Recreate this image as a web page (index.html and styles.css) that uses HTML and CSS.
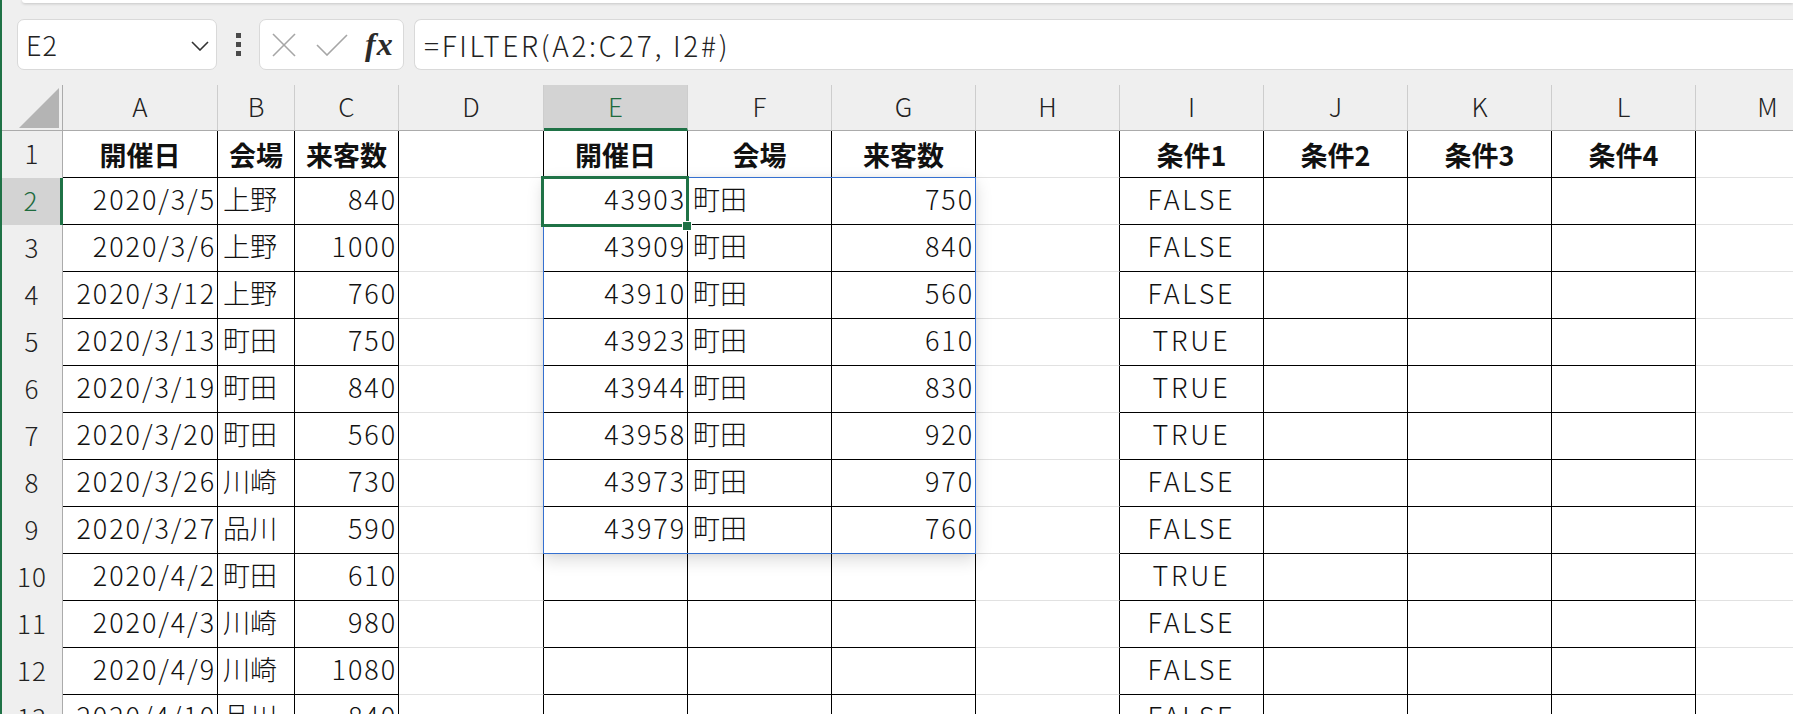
FILE: index.html
```html
<!DOCTYPE html>
<html lang="ja">
<head>
<meta charset="utf-8">
<title>Excel FILTER</title>
<link rel="stylesheet" href="styles.css">
</head>
<body>
<div class="app">
  <div class="ribbon-edge"></div>
  <div class="fbar">
    <div class="namebox">
      <span class="nb-text">E2</span>
      <svg class="chev" width="18" height="10" viewBox="0 0 18 10"><polyline points="1,1 9,9 17,1" fill="none" stroke="#333" stroke-width="1.6"/></svg>
    </div>
    <div class="dots"><i></i><i></i><i></i></div>
    <div class="fxbox">
      <svg class="ic-x" width="24" height="24" viewBox="0 0 24 24"><line x1="1" y1="1" x2="23" y2="23" stroke="#a6a6a6" stroke-width="1.6"/><line x1="23" y1="1" x2="1" y2="23" stroke="#a6a6a6" stroke-width="1.6"/></svg>
      <svg class="ic-ok" width="32" height="22" viewBox="0 0 32 22"><polyline points="1,11 11,21 31,1" fill="none" stroke="#a6a6a6" stroke-width="1.6"/></svg>
      <span class="fx">fx</span>
    </div>
    <div class="formula">=FILTER(A2:C27, I2#)</div>
  </div>

  <div class="sheet">
    <div class="grid">
      <div class="corner"><span class="tri"></span></div>
      <div class="ch">A</div><div class="ch">B</div><div class="ch">C</div><div class="ch">D</div>
      <div class="ch sel">E</div><div class="ch">F</div><div class="ch">G</div><div class="ch">H</div>
      <div class="ch">I</div><div class="ch">J</div><div class="ch">K</div><div class="ch">L</div><div class="ch">M</div>

      <div class="rh">1</div>
      <div class="c t hd">開催日</div><div class="c t hd">会場</div><div class="c t hd">来客数</div><div class="c g"></div>
      <div class="c t hd">開催日</div><div class="c t hd">会場</div><div class="c t hd">来客数</div><div class="c g"></div>
      <div class="c t hd">条件1</div><div class="c t hd">条件2</div><div class="c t hd">条件3</div><div class="c t hd">条件4</div><div class="c"></div>

      <div class="rh sel">2</div>
      <div class="c t r">2020/3/5</div><div class="c t l">上野</div><div class="c t r">840</div><div class="c g"></div>
      <div class="c t r">43903</div><div class="c t l">町田</div><div class="c t r">750</div><div class="c g"></div>
      <div class="c t m">FALSE</div><div class="c t"></div><div class="c t"></div><div class="c t"></div><div class="c"></div>

      <div class="rh">3</div>
      <div class="c t r">2020/3/6</div><div class="c t l">上野</div><div class="c t r">1000</div><div class="c g"></div>
      <div class="c t r">43909</div><div class="c t l">町田</div><div class="c t r">840</div><div class="c g"></div>
      <div class="c t m">FALSE</div><div class="c t"></div><div class="c t"></div><div class="c t"></div><div class="c"></div>

      <div class="rh">4</div>
      <div class="c t r">2020/3/12</div><div class="c t l">上野</div><div class="c t r">760</div><div class="c g"></div>
      <div class="c t r">43910</div><div class="c t l">町田</div><div class="c t r">560</div><div class="c g"></div>
      <div class="c t m">FALSE</div><div class="c t"></div><div class="c t"></div><div class="c t"></div><div class="c"></div>

      <div class="rh">5</div>
      <div class="c t r">2020/3/13</div><div class="c t l">町田</div><div class="c t r">750</div><div class="c g"></div>
      <div class="c t r">43923</div><div class="c t l">町田</div><div class="c t r">610</div><div class="c g"></div>
      <div class="c t m">TRUE</div><div class="c t"></div><div class="c t"></div><div class="c t"></div><div class="c"></div>

      <div class="rh">6</div>
      <div class="c t r">2020/3/19</div><div class="c t l">町田</div><div class="c t r">840</div><div class="c g"></div>
      <div class="c t r">43944</div><div class="c t l">町田</div><div class="c t r">830</div><div class="c g"></div>
      <div class="c t m">TRUE</div><div class="c t"></div><div class="c t"></div><div class="c t"></div><div class="c"></div>

      <div class="rh">7</div>
      <div class="c t r">2020/3/20</div><div class="c t l">町田</div><div class="c t r">560</div><div class="c g"></div>
      <div class="c t r">43958</div><div class="c t l">町田</div><div class="c t r">920</div><div class="c g"></div>
      <div class="c t m">TRUE</div><div class="c t"></div><div class="c t"></div><div class="c t"></div><div class="c"></div>

      <div class="rh">8</div>
      <div class="c t r">2020/3/26</div><div class="c t l">川崎</div><div class="c t r">730</div><div class="c g"></div>
      <div class="c t r">43973</div><div class="c t l">町田</div><div class="c t r">970</div><div class="c g"></div>
      <div class="c t m">FALSE</div><div class="c t"></div><div class="c t"></div><div class="c t"></div><div class="c"></div>

      <div class="rh">9</div>
      <div class="c t r">2020/3/27</div><div class="c t l">品川</div><div class="c t r">590</div><div class="c g"></div>
      <div class="c t r">43979</div><div class="c t l">町田</div><div class="c t r">760</div><div class="c g"></div>
      <div class="c t m">FALSE</div><div class="c t"></div><div class="c t"></div><div class="c t"></div><div class="c"></div>

      <div class="rh">10</div>
      <div class="c t r">2020/4/2</div><div class="c t l">町田</div><div class="c t r">610</div><div class="c g"></div>
      <div class="c t"></div><div class="c t"></div><div class="c t"></div><div class="c g"></div>
      <div class="c t m">TRUE</div><div class="c t"></div><div class="c t"></div><div class="c t"></div><div class="c"></div>

      <div class="rh">11</div>
      <div class="c t r">2020/4/3</div><div class="c t l">川崎</div><div class="c t r">980</div><div class="c g"></div>
      <div class="c t"></div><div class="c t"></div><div class="c t"></div><div class="c g"></div>
      <div class="c t m">FALSE</div><div class="c t"></div><div class="c t"></div><div class="c t"></div><div class="c"></div>

      <div class="rh">12</div>
      <div class="c t r">2020/4/9</div><div class="c t l">川崎</div><div class="c t r">1080</div><div class="c g"></div>
      <div class="c t"></div><div class="c t"></div><div class="c t"></div><div class="c g"></div>
      <div class="c t m">FALSE</div><div class="c t"></div><div class="c t"></div><div class="c t"></div><div class="c"></div>

      <div class="rh">13</div>
      <div class="c t r">2020/4/10</div><div class="c t l">品川</div><div class="c t r">840</div><div class="c g"></div>
      <div class="c t"></div><div class="c t"></div><div class="c t"></div><div class="c g"></div>
      <div class="c t m">FALSE</div><div class="c t"></div><div class="c t"></div><div class="c t"></div><div class="c"></div>
    </div>
    <div class="spill"></div>
    <div class="cursor"></div>
    <div class="handle"></div>
  </div>
</div>
</body>
</html>
```

FILE: styles.css
```css
* { box-sizing: border-box; }
html, body { margin: 0; padding: 0; }
body {
  width: 1793px;
  height: 714px;
  overflow: hidden;
  background: #efefef;
  font-family: "Noto Sans CJK JP", "Noto Sans", sans-serif;
  color: #111;
}
.app {
  height: 714px;
  border-left: 2px solid #1f7246;
  overflow: hidden;
}
.ribbon-edge {
  height: 3px;
  margin-left: 20px;
  background: #fff;
  border-bottom-left-radius: 4px;
  box-shadow: 0 1px 3px rgba(0,0,0,0.18);
}
.fbar {
  display: flex;
  align-items: center;
  height: 51px;
  margin-top: 16px;
  padding-left: 15px;
}
.namebox {
  width: 200px;
  height: 51px;
  background: #fff;
  border: 1px solid #d9d9d9;
  border-radius: 7px;
  display: flex;
  align-items: center;
  justify-content: space-between;
  padding: 0 7px 0 8px;
}
.nb-text { font-size: 27px; color: #222; font-weight: 300; letter-spacing: 1px; }
.chev { margin-top: 2px; }
.dots {
  width: 42px;
  display: flex;
  flex-direction: column;
  align-items: center;
  gap: 4px;
}
.dots i {
  display: block;
  width: 5px;
  height: 5px;
  background: #4a4a4a;
}
.fxbox {
  width: 145px;
  height: 51px;
  background: #fff;
  border: 1px solid #d9d9d9;
  border-radius: 7px;
  display: flex;
  align-items: center;
  padding-left: 12px;
}
.ic-x { margin-right: 20px; }
.ic-ok { margin-right: 17px; }
.fx {
  font-family: "Liberation Serif", "DejaVu Serif", serif;
  font-style: italic;
  font-weight: 700;
  font-size: 32px;
  color: #2a2a2a;
  letter-spacing: 1px;
}
.formula {
  flex: 1;
  margin-left: 10px;
  height: 51px;
  background: #fff;
  border: 1px solid #d9d9d9;
  border-right: none;
  border-radius: 7px 0 0 7px;
  display: flex;
  align-items: center;
  padding-left: 9px;
  font-size: 28px;
  font-weight: 300;
  letter-spacing: 2.7px;
  color: #222;
}
.sheet {
  position: relative;
  margin-top: 15px;
  background: #fff;
}
.grid {
  display: grid;
  grid-template-columns: 61px 155px 77px 104px 145px 144px 144px 144px 144px 144px 144px 144px 144px 144px;
  grid-template-rows: 46px repeat(13, 47px);
}
.corner {
  background: #efefef;
  border-right: 1px solid #ababab;
  border-bottom: 1px solid #ababab;
  position: relative;
}
.tri {
  position: absolute;
  right: 3px;
  bottom: 2px;
  width: 0;
  height: 0;
  border-left: 40px solid transparent;
  border-bottom: 40px solid #b4b4b4;
}
.ch {
  background: #efefef;
  border-right: 1px solid #cdcdcd;
  border-bottom: 1px solid #ababab;
  display: flex;
  align-items: center;
  justify-content: center;
  font-size: 26px;
  font-weight: 300;
  color: #222;
  padding-bottom: 4px;
}
.ch.sel {
  background: #d3d3d3;
  color: #1e6b3e;
  border-bottom: 3px solid #1f7246;
  padding-bottom: 2px;
}
.rh {
  background: #efefef;
  border-right: 1px solid #ababab;
  display: flex;
  align-items: center;
  justify-content: center;
  font-size: 26px;
  font-weight: 300;
  color: #222;
  padding-bottom: 5px;
  letter-spacing: 1px;
}
.rh.sel {
  background: #d3d3d3;
  color: #1e6b3e;
  border-right: 3px solid #1f7246;
}
.c {
  background: #fff;
  border-right: 1px solid #e1e1e1;
  border-bottom: 1px solid #e1e1e1;
  display: flex;
  align-items: center;
  font-size: 27px;
  font-weight: 300;
  line-height: 1;
  white-space: nowrap;
  overflow: hidden;
  color: #111;
  padding-bottom: 5px;
  letter-spacing: 1.9px;
}
.c.t {
  border-right-color: #000;
  border-bottom-color: #000;
}
.c.g { border-right-color: #000; }
.c.hd {
  justify-content: center;
  font-weight: 700;
  padding-bottom: 0;
  letter-spacing: 0;
}
.c.r { justify-content: flex-end; padding-right: 1px; }
.c.l { justify-content: flex-start; padding-left: 5px; letter-spacing: 0; }
.c.m { justify-content: center; letter-spacing: 2.8px; }
.spill {
  position: absolute;
  left: 541px;
  top: 92px;
  width: 433px;
  height: 377px;
  border: 1px solid #3570d0;
  box-shadow: 0 6px 16px rgba(0,0,0,0.14), 0 0 6px rgba(0,0,0,0.06);
  pointer-events: none;
}
.cursor {
  position: absolute;
  left: 539px;
  top: 91px;
  width: 148px;
  height: 51px;
  border: 3px solid #1f7246;
}
.handle {
  position: absolute;
  left: 681px;
  top: 137px;
  width: 8px;
  height: 8px;
  background: #1f7246;
  outline: 1px solid #fff;
}
```
